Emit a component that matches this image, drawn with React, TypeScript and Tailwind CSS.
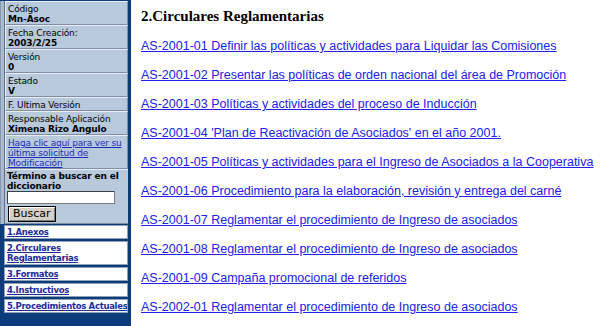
import React from "react";

const info = [
  { label: "Código", value: "Mn-Asoc" },
  { label: "Fecha Creación:", value: "2003/2/25" },
  { label: "Versión", value: "0" },
  { label: "Estado", value: "V" },
  { label: "F. Ultima Versión", value: "" },
  { label: "Responsable Aplicación", value: "Ximena Rizo Angulo" },
];

const menu = [["1.Anexos"], ["2.Circulares", "Reglamentarias"], ["3.Formatos"], ["4.Instructivos"], ["5.Procedimientos Actuales"]];

const circulares = [
  "AS-2001-01 Definir las políticas y actividades para Liquidar las Comisiones",
  "AS-2001-02 Presentar las políticas de orden nacional del área de Promoción",
  "AS-2001-03 Políticas y actividades del proceso de Inducción",
  "AS-2001-04 'Plan de Reactivación de Asociados' en el año 2001.",
  "AS-2001-05 Políticas y actividades para el Ingreso de Asociados a la Cooperativa",
  "AS-2001-06 Procedimiento para la elaboración, revisión y entrega del carné",
  "AS-2001-07 Reglamentar el procedimiento de Ingreso de asociados",
  "AS-2001-08 Reglamentar el procedimiento de Ingreso de asociados",
  "AS-2001-09 Campaña promocional de referidos",
  "AS-2002-01 Reglamentar el procedimiento de Ingreso de asociados",
];

function Cell({ children }: { children: React.ReactNode }) {
  return (
    <div className="bg-[#b9c9dc] border-t border-l border-t-white/70 border-l-white/70 border-b border-r border-b-[#7d8ea6] border-r-[#7d8ea6] px-[2px] pt-[2px] pb-0 leading-[10px]">
      {children}
    </div>
  );
}

export default function App() {
  return (
    <div className="flex w-[600px] h-[326px] bg-white overflow-hidden">
      <aside className="w-[131px] shrink-0 bg-[#0d3c7d] pt-[1px] pr-[3px] flex flex-col text-[9px] tracking-[-0.15px] text-black font-['DejaVu_Sans',sans-serif]">
        <div className="flex flex-col bg-[#a9b9cf] pl-[3px] border-l border-l-[#8797ae]">
          <div className="flex flex-col border-l border-l-[#5d6e88]">
            {info.map((r) => (
              <Cell key={r.label}>
                <div>{r.label}</div>
                {r.value && <div className="font-bold">{r.value}</div>}
              </Cell>
            ))}
            <Cell>
              <a href="#" className="text-[#1c2bb8] underline">
                Haga clic aquí para ver su última solicitud de Modificación
              </a>
            </Cell>
            <div className="bg-[#b9c9dc] border-t border-t-white/70 border-b border-b-[#7d8ea6] px-[2px] pt-[1px] pb-[1px] leading-[10px]">
              <div className="font-bold">Término a buscar en el diccionario</div>
              <input className="block w-[108px] h-[13px] bg-white border border-[#7a7a7a] border-t-[#404040] border-l-[#404040]" />
              <button className="mt-[2px] ml-[1px] h-[16px] px-[4px] bg-[#d4d0c8] border border-black text-[11px] leading-[12px] tracking-normal shadow-[inset_1px_1px_0_#fff,inset_-1px_-1px_0_#808080]">
                Buscar
              </button>
            </div>
          </div>
        </div>
        <div className="flex flex-col gap-[2px] pt-[1px] pl-[4px]">
          {menu.map((m) => (
            <div key={m[0]} className="bg-white border border-[#8f9fb6] px-[2px] py-[1px] leading-[10px] overflow-hidden whitespace-nowrap">
              <a href="#" className="text-[#1c2a9a] font-bold underline text-[8.5px] tracking-[-0.3px]">
                {m[0]}
                {m[1] && <br />}
                {m[1]}
              </a>
            </div>
          ))}
        </div>
      </aside>
      <main className="flex-1 pl-[10px] pt-[8px]">
        <h2 className="font-['Liberation_Serif',serif] font-bold text-[15px] leading-[16px] text-black">
          2.Circulares Reglamentarias
        </h2>
        <div className="flex flex-col gap-[13px] mt-[14px] font-['Liberation_Sans',sans-serif] text-[12.5px] leading-[16px]">
          {circulares.map((c, i) => (
            <a key={i} href="#" className="text-[#2020f0] underline whitespace-nowrap">{c}</a>
          ))}
        </div>
      </main>
    </div>
  );
}
